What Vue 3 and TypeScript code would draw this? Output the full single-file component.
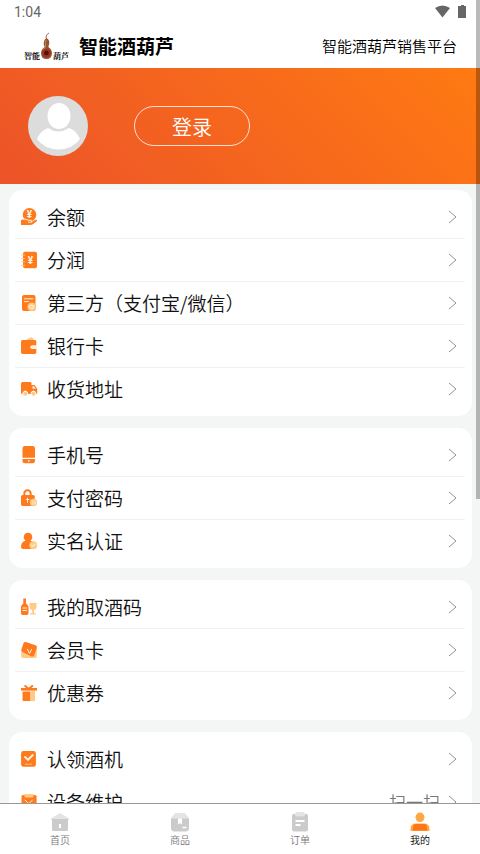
<script setup lang="ts">
import { ref } from 'vue'

interface Shape {
  d: string
  c: string
}
interface Icon {
  shapes: Shape[]
  sign?: string
  x?: number
  y?: number
}
interface Item {
  label: string
  icon: string
  note?: string
}

const icons: Record<string, Icon> = {
  balance: {
    shapes: [
      { d: 'M9.5 0a6.8 6.8 0 1 1 0 13.6a6.8 6.8 0 1 1 0-13.6z', c: 'main' },
      { d: 'M1 12.2Q3.5 10.6 6 11.8L8.5 12.6H11Q12 13.8 10.8 14.3L15 12Q17.2 11.3 17 13L12.5 16.6Q11.5 17.3 8 17H1z', c: 'main' },
      { d: 'M3.5 11.1Q5 10.6 7 11.8L9 12.3H11.3Q12.5 12.8 11.7 14.2H8.5', c: 'pale-line' },
    ],
    sign: '¥', x: 9.5, y: 9.5,
  },
  profit: {
    shapes: [
      { d: 'M5 .8h10a2 2 0 0 1 2 2v12.4a2 2 0 0 1-2 2H5a2 2 0 0 1-2-2V2.8a2 2 0 0 1 2-2z', c: 'main' },
      { d: 'M1.5 4H4.5M1.5 7.5H4.5M1.5 11H4.5M1.5 14.3H4.5', c: 'light-line' },
    ],
    sign: '¥', x: 10.5, y: 12.5,
  },
  third: {
    shapes: [
      { d: 'M4 1h9.5a2 2 0 0 1 2 2v12a2 2 0 0 1-2 2H4a2 2 0 0 1-2-2V3a2 2 0 0 1 2-2z', c: 'main' },
      { d: 'M4.5 4.8H13M4.5 7.6H8.5', c: 'pale-line' },
      { d: 'M11.8 8.5a4.4 4.4 0 1 1 0 8.8a4.4 4.4 0 1 1 0-8.8z', c: 'light' },
      { d: 'M11.8 11L13.8 13L11.8 15L9.8 13z', c: 'white-line' },
    ],
  },
  wallet: {
    shapes: [
      { d: 'M5 3.5L11 .3Q12.5 0 13 1.500L14 3.500z', c: 'light' },
      { d: 'M2.5 3H15Q16.3 3 16.3 4.5V15.2Q16.3 17 14.6 17H2.8Q1 17 1 15.2V4.5Q1 3 2.5 3z', c: 'main' },
      { d: 'M12.3 8.3H17V12H12.3Q10.3 12 10.3 10.2Q10.3 8.3 12.3 8.3z', c: 'pale' },
    ],
  },
  truck: {
    shapes: [
      { d: 'M2.5 2H10.2Q11.5 2 11.5 3.4V14H2.2Q1 14 1 12.8V3.5Q1 2 2.5 2z', c: 'main' },
      { d: 'M11 5H14.5L17.2 8.7V14H11z', c: 'main' },
      { d: 'M12.5 6.3H14L15.7 8.8H12.5z', c: 'pale' },
      { d: 'M5.3 11.2a2.5 2.5 0 1 1 0 5a2.5 2.5 0 1 1 0-5zM13.5 11.2a2.5 2.5 0 1 1 0 5a2.5 2.5 0 1 1 0-5z', c: 'light rim' },
    ],
  },
  phone: {
    shapes: [
      { d: 'M5 0h7.5a2.5 2.5 0 0 1 2.5 2.5v9.3H2.5V2.5A2.5 2.5 0 0 1 5 0z', c: 'main' },
      { d: 'M2.5 13H15V15Q15 17.2 12.6 17.2H4.8Q2.5 17.2 2.5 15z', c: 'main' },
      { d: 'M8.8 13.9a.9.9 0 1 1 0 1.8a.9.9 0 1 1 0-1.8z', c: 'pale' },
    ],
  },
  lock: {
    shapes: [
      { d: 'M4.3 7V4.5a3.2 3.2 0 0 1 6.4 0V7', c: 'main-line' },
      { d: 'M2.5 6h10.7q1.5 0 1.5 1.5v7.7q0 1.8-1.8 1.8H2.8Q1 17 1 15.2V7.5Q1 6 2.5 6z', c: 'main' },
      { d: 'M7.5 9.2V13.2M6.2 10.5H8.8', c: 'pale-line' },
      { d: 'M13.5 9.8a3.7 3.7 0 1 1 0 7.4a3.7 3.7 0 1 1 0-7.4z', c: 'light' },
      { d: 'M12.2 12V15M14 11.5V15.5M15.5 12.5V14.5', c: 'thin' },
    ],
  },
  person: {
    shapes: [
      { d: 'M8 .8a4.2 4.2 0 0 1 2.5 7.6Q14 9.5 14.5 13V17H3Q1 17 1 14.8Q1.2 9.8 5.5 8.4A4.2 4.2 0 0 1 8 .8z', c: 'main' },
      { d: 'M13.3 9.3a3.9 3.9 0 1 1 0 7.8a3.9 3.9 0 1 1 0-7.8z', c: 'light' },
      { d: 'M11.5 13L13 14.5L15.4 12', c: 'white-line' },
    ],
  },
  wine: {
    shapes: [
      { d: 'M3.3 .5H6V5.5Q8.5 7 8.5 9V15.3Q8.5 17 6.8 17H2.8Q1 17 1 15.3V9Q1 7 3.3 5.5z', c: 'main' },
      { d: 'M3 10H6.7M3 12.5H6.7', c: 'pale-line' },
      { d: 'M9.5 5H16.5V8.5Q16.5 11.4 14 12V15.2H16V16.5H10V15.2H12.2V12Q9.5 11.4 9.5 8.5z', c: 'light' },
    ],
  },
  card: {
    shapes: [
      { d: 'M1.2 8H16.8V15Q16.8 17 15 17H3Q1.2 17 1.2 15z', c: 'light' },
      { d: 'M5.8 1.1L15.5 4.2Q17.5 5 16.8 7L14.2 14.3Q13.5 16 11.5 15.5L2.5 11Q1 9.8 1.6 8L3.5 2.2Q4.2.7 5.8 1.1z', c: 'main' },
      { d: 'M7.5 8.5L9.5 12.5L11.5 8.5', c: 'pale-line' },
    ],
  },
  gift: {
    shapes: [
      { d: 'M11 7H15V17H11z', c: 'light' },
      { d: 'M2.5 7.5H10.5V17H3.5Q2.5 17 2.5 16z', c: 'main' },
      { d: 'M1 4H17V6.6H1z', c: 'main' },
      { d: 'M5.2 2L8.8 5L12.3 2', c: 'main-line' },
    ],
  },
  claim: {
    shapes: [
      { d: 'M3.5 1h10a2.4 2.4 0 0 1 2.4 2.4v11a2.4 2.4 0 0 1-2.4 2.4h-10a2.4 2.4 0 0 1-2.4-2.4v-11A2.4 2.4 0 0 1 3.5 1z', c: 'main' },
      { d: 'M5 7L8 9.8L12.8 5', c: 'pale-line bold' },
      { d: 'M5.5 14.2H11.5', c: 'light-line' },
    ],
  },
  repair: {
    shapes: [
      { d: 'M3 2H15Q16.6 2 16.6 3.5V15.3Q16.6 17 15 17H3Q1.5 17 1.5 15.3V3.5Q1.5 2 3 2z', c: 'main' },
      { d: 'M4.5 1H13.5V3.5Q13.5 4.5 12.5 4.5H5.5Q4.5 4.5 4.5 3.5z', c: 'light' },
      { d: 'M5 7L8 10L6 12M12.5 7L9.5 10L12 12.5', c: 'pale-line' },
    ],
  },
}

const groups: Item[][] = [
  [
    { label: '余额', icon: 'balance' },
    { label: '分润', icon: 'profit' },
    { label: '第三方（支付宝/微信）', icon: 'third' },
    { label: '银行卡', icon: 'wallet' },
    { label: '收货地址', icon: 'truck' },
  ],
  [
    { label: '手机号', icon: 'phone' },
    { label: '支付密码', icon: 'lock' },
    { label: '实名认证', icon: 'person' },
  ],
  [
    { label: '我的取酒码', icon: 'wine' },
    { label: '会员卡', icon: 'card' },
    { label: '优惠券', icon: 'gift' },
  ],
  [
    { label: '认领酒机', icon: 'claim' },
    { label: '设备维护', icon: 'repair', note: '扫一扫' },
  ],
]

const tabs: { label: string; shapes: Shape[] }[] = [
  {
    label: '首页',
    shapes: [
      { d: 'M10 1L19 6.5V8H1V6.5z', c: 'g-light' },
      { d: 'M2 7H18V17.5Q18 19 16.5 19H3.5Q2 19 2 17.5z', c: 'g' },
      { d: 'M9 12H11V16H9z', c: 'w' },
    ],
  },
  {
    label: '商品',
    shapes: [
      { d: 'M5 1H15L19 6V8H1V6z', c: 'g-light' },
      { d: 'M1 6.5H19V16Q19 19.5 15.5 19.5H4.5Q1 19.5 1 16z', c: 'g' },
      { d: 'M8 6.5H12V12.5L10 11.3L8 12.5zM12.5 14.8H16.5V16.3H12.5z', c: 'w' },
    ],
  },
  {
    label: '订单',
    shapes: [
      { d: 'M3.5 2H16.5Q18 2 18 3.5V17.5Q18 19.5 16 19.5H4Q2 19.5 2 17.5V3.5Q2 2 3.5 2z', c: 'g' },
      { d: 'M7 0H13Q15 0 15 2.2Q15 4.5 13 4.5H7Q5 4.5 5 2.2Q5 0 7 0z', c: 'g-light' },
      { d: 'M5.5 9H14.5M5.5 13H10.5', c: 'w-line' },
    ],
  },
  {
    label: '我的',
    shapes: [
      { d: 'M10 .5a4.5 4.8 0 1 1 0 9.6a4.5 4.8 0 1 1 0-9.6z', c: 'o-light' },
      { d: 'M6 11.5H14Q19.5 11.5 19.5 17V19H.5V17Q.5 11.5 6 11.5z', c: 'o-light' },
      { d: 'M6 12H14Q17 12 17 16V18.6H3V16Q3 12 6 12z', c: 'o' },
    ],
  },
]

const active = ref(3)
</script>

<template>
  <div class="app">
    <div class="status">
      <span>1:04</span>
      <svg class="signals" viewBox="0 0 32 16" aria-hidden="true">
        <path d="M1 4Q8.5-1 16 4L8.5 13.5z" />
        <path d="M25 2H27V1H30V2H32V14H24V2z" />
      </svg>
    </div>

    <header class="header">
      <div class="logo">
        <span>智能</span>
        <svg class="gourd" viewBox="0 0 12 28" aria-hidden="true">
          <path d="M6 8Q4.5 3 8.5 1" fill="none" stroke="#a5605a" />
          <path d="M6 6Q9 7.5 8.8 11Q8.5 13.5 7.8 15Q11.5 17 11.5 21.5Q11 27 6 27Q.8 27 .5 21.5Q.5 17 4.2 15Q3 13 3.2 10.5Q3.5 7.5 6 6z" fill="#8f5530" />
          <path d="M5.8 8Q4 10 5.2 14Q4 16 3 18" fill="none" stroke="#c38a58" />
          <circle cx="6" cy="21" r="4.2" fill="#a52b1d" />
          <circle cx="6" cy="21" r="2.3" fill="#4a1510" />
        </svg>
        <span>葫芦</span>
      </div>
      <h1>智能酒葫芦</h1>
      <p>智能酒葫芦销售平台</p>
    </header>

    <main class="content">
      <section class="profile">
        <svg class="avatar" viewBox="0 0 60 60" aria-hidden="true">
          <circle cx="30" cy="30" r="30" fill="#dcdcdc" />
          <ellipse cx="31" cy="20" rx="11.5" ry="13" fill="#fff" />
          <path d="M20 32Q30 39 41 32Q49 35 52 43Q45 53 30.5 53.5Q16 53 9 43Q12 35 20 32z" fill="#fff" />
        </svg>
        <button class="login" type="button">登录</button>
      </section>

      <nav class="menu" aria-label="我的">
        <ul v-for="(group, g) in groups" :key="g" class="card">
          <li v-for="item in group" :key="item.label">
            <a href="#" class="row" @click.prevent>
              <svg class="icon" viewBox="0 0 18 18" aria-hidden="true">
                <path v-for="(s, i) in icons[item.icon].shapes" :key="i" :d="s.d" :class="s.c" />
                <text v-if="icons[item.icon].sign" :x="icons[item.icon].x" :y="icons[item.icon].y">{{ icons[item.icon].sign }}</text>
              </svg>
              <span class="label">{{ item.label }}</span>
              <span v-if="item.note" class="note">{{ item.note }}</span>
              <svg class="chevron" viewBox="0 0 9 14" aria-hidden="true"><path d="M1 1L8 7L1 13" /></svg>
            </a>
          </li>
        </ul>
      </nav>
    </main>

    <nav class="tabs" aria-label="导航">
      <button v-for="(tab, i) in tabs" :key="tab.label" type="button" :class="{ active: active === i }" @click="active = i">
        <svg viewBox="0 0 20 20" aria-hidden="true">
          <path v-for="(s, n) in tab.shapes" :key="n" :d="s.d" :class="s.c" />
        </svg>
        <span>{{ tab.label }}</span>
      </button>
    </nav>

    <div class="scrollbar"></div>
  </div>
</template>

<style>
body {
  margin: 0;
}
</style>

<style scoped>
.app {
  position: relative;
  display: flex;
  flex-direction: column;
  height: 100vh;
  background: #f4f6f6;
  color: #111;
  font-family: 'Noto Sans CJK SC', sans-serif;
  font-weight: 350;
}
.app * {
  box-sizing: border-box;
}
svg {
  display: block;
  flex: none;
}
.status {
  display: flex;
  align-items: center;
  justify-content: space-between;
  height: 24px;
  padding: 0 14px;
  background: #fff;
  color: #666;
  font: 14px/24px Roboto, sans-serif;
}
.signals {
  width: 32px;
  height: 16px;
  fill: #666;
}
.header {
  display: flex;
  align-items: center;
  height: 44px;
  padding: 0 23px 0 24px;
  background: #fff;
  color: #000;
}
.logo {
  display: flex;
  align-items: flex-end;
  margin-right: 10px;
  font-size: 8px;
  line-height: 8px;
  font-weight: 700;
  font-family: 'Noto Serif CJK SC', 'Noto Sans CJK SC', serif;
}
.gourd {
  width: 13px;
  height: 28px;
}
h1 {
  margin: 0;
  font-size: 19px;
  line-height: 28px;
  font-weight: 700;
}
.header p {
  margin: 0 0 0 auto;
  font-size: 15px;
  line-height: 24px;
}
.content {
  flex: 1;
  min-height: 0;
  overflow-y: auto;
  scrollbar-width: none;
}
.profile {
  display: flex;
  align-items: center;
  gap: 46px;
  padding: 28px;
  background: linear-gradient(45deg, #ec5329, #ff7a12);
}
.avatar {
  width: 60px;
  height: 60px;
}
.login {
  width: 116px;
  height: 40px;
  padding: 2px 0 0;
  border: 1px solid rgba(255, 255, 255, 0.8);
  border-radius: 20px;
  background: transparent;
  color: #fff;
  font: inherit;
  font-size: 20px;
  line-height: 36px;
}
.menu {
  display: flex;
  flex-direction: column;
  gap: 12px;
  padding: 6px 8px 12px 9px;
}
.card {
  margin: 0;
  padding: 6px 7px 5px 6px;
  border-radius: 14px;
  background: #fff;
  list-style: none;
}
.row {
  display: flex;
  align-items: center;
  height: 43px;
  padding: 0 8px 0 5px;
  border-bottom: 1px solid #f0f1f1;
  color: inherit;
  text-decoration: none;
}
.card li:last-child .row,
.card:last-child .row {
  border-bottom-color: transparent;
}
.icon {
  width: 18px;
  height: 18px;
  margin-right: 9px;
}
.label {
  flex: 1;
  font-size: 19px;
  line-height: 28px;
}
.note {
  margin-right: 8px;
  color: #777;
  font-size: 17px;
  line-height: 28px;
}
.chevron {
  width: 9px;
  height: 14px;
  fill: none;
  stroke: #909399;
}
.icon path {
  fill: none;
  stroke-linecap: round;
  stroke-linejoin: round;
}
.icon text {
  fill: #fff4e0;
  font: 700 10px Roboto, sans-serif;
  text-anchor: middle;
}
.icon .main {
  fill: #ff7a1c;
}
.icon .light {
  fill: #ffc986;
}
.icon .rim {
  stroke: #fff;
}
.icon .pale {
  fill: #fff0dc;
}
.icon .main-line {
  stroke: #ff7a1c;
  stroke-width: 2;
}
.icon .light-line {
  stroke: #ffc986;
}
.icon .pale-line {
  stroke: #fff0dc;
}
.icon .white-line {
  stroke: #fff;
}
.icon .thin {
  stroke: #ffe6c4;
}
.icon .bold {
  stroke-width: 2;
}
.tabs {
  display: flex;
  height: 51px;
  border-top: 1px solid #999;
  background: #fff;
}
.tabs button {
  display: flex;
  flex: 1;
  flex-direction: column;
  align-items: center;
  gap: 1px;
  padding: 8px 0 0;
  border: 0;
  background: transparent;
  color: #777;
  font: inherit;
  font-size: 10px;
  line-height: 14px;
}
.tabs .active {
  color: #000;
}
.tabs svg {
  width: 20px;
  height: 20px;
}
.tabs .g {
  fill: #cbcbcb;
}
.tabs .g-light {
  fill: #e4e4e4;
}
.tabs .w {
  fill: #fff;
}
.tabs .w-line {
  stroke: #fff;
  stroke-width: 2;
}
.tabs .o {
  fill: #ff7518;
}
.tabs .o-light {
  fill: #ffa743;
}
.scrollbar {
  position: absolute;
  top: 0;
  right: 0;
  width: 4px;
  height: 499px;
  background: rgba(0, 0, 0, 0.27);
}
</style>
